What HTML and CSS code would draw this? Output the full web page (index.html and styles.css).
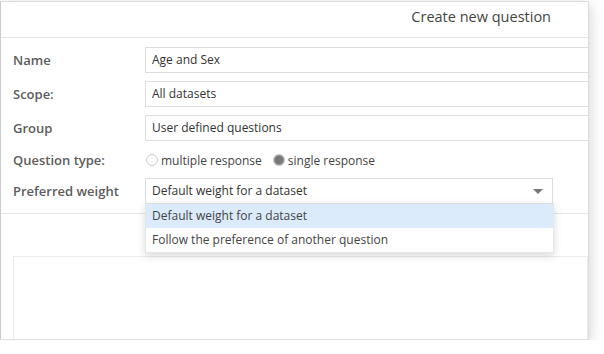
FILE: index.html
```html
<!DOCTYPE html>
<html>
<head>
    <title>Create new question</title>
    <link rel="stylesheet" href="styles.css">
</head>
<body>
    <div class="dialog">
        <div class="header">Create new question</div>

        <div class="form">
            <div class="row">
                <label>Name</label>
                <div class="input">Age and Sex</div>
            </div>
            <div class="row">
                <label>Scope:</label>
                <div class="input">All datasets</div>
            </div>
            <div class="row">
                <label>Group</label>
                <div class="input">User defined questions</div>
            </div>
            <div class="row radio-row">
                <label>Question type:</label>
                <span class="radio"></span><span class="radio-text">multiple response</span>
                <span class="radio checked"></span><span class="radio-text">single response</span>
            </div>
            <div class="row">
                <label>Preferred weight</label>
                <div class="select">
                    Default weight for a dataset
                    <span class="arrow"></span>
                    <div class="menu">
                        <div class="option active">Default weight for a dataset</div>
                        <div class="option">Follow the preference of another question</div>
                    </div>
                </div>
            </div>
        </div>

        <div class="panel"></div>
    </div>
</body>
</html>
```

FILE: styles.css
```css
body {
    margin: 0;
    background: white;
    font-family: "Open Sans", Arial, sans-serif;
    color: #444;
}
.dialog {
    width: 587px;
    height: 337px;
    margin: 1px 0 0 0;
    border: 1px solid #ddd;
    border-left-color: #ccc;
    box-shadow: 0 4px 14px rgba(0,0,0,0.2);
    overflow: hidden;
    background: white;
}
.header {
    height: 35px;
    line-height: 30px;
    border-bottom: 1px solid #e3e3e3;
    text-align: right;
    padding-right: 37px;
    font-size: 14.5px;
    color: #444;
}
.form {
    padding: 9px 0 9px 12px;
    border-bottom: 1px solid #e5e5e5;
}
.row {
    display: flex;
    align-items: center;
    margin-bottom: 8px;
}
.row:last-child {
    margin-bottom: 0;
}
.row label {
    width: 132px;
    flex-shrink: 0;
    font-size: 13px;
    font-weight: 600;
    color: #5c5c5c;
}
.input {
    width: 460px;
    flex-shrink: 0;
    height: 24px;
    line-height: 24px;
    border: 1px solid #ddd;
    padding-left: 6px;
    font-size: 12px;
    color: #333;
}
.radio-row {
    height: 20px;
    margin: 9px 0 8px 0;
}
.radio {
    width: 10px;
    height: 10px;
    border: 1.5px solid #ccc;
    border-radius: 50%;
    margin-left: 1px;
    margin-right: 3px;
    background: white;
}
.radio.checked {
    background: #777;
    border-color: #ccc;
    box-shadow: inset 0 0 0 1px #999;
    margin-left: 0;
}
.radio-text {
    font-size: 12px;
    color: #444;
    margin-right: 11px;
}
.select {
    position: relative;
    width: 400px;
    height: 24px;
    line-height: 24px;
    border: 1px solid #ddd;
    padding-left: 6px;
    font-size: 12px;
    color: #333;
}
.arrow {
    position: absolute;
    right: 9px;
    top: 10px;
    border-left: 5px solid transparent;
    border-right: 5px solid transparent;
    border-top: 5px solid #777;
}
.menu {
    position: absolute;
    left: -1px;
    top: 24px;
    width: 407px;
    background: white;
    border: 1px solid #e6e6e6;
    border-top-color: #ddd;
    box-shadow: 0 3px 8px rgba(0,0,0,0.15);
    z-index: 2;
}
.option {
    height: 24px;
    line-height: 24px;
    padding-left: 6px;
    color: #444;
}
.option.active {
    background: #dbebfc;
}
.panel {
    margin: 42px 0 0 12px;
    height: 100px;
    border: 1px solid #ececec;
}
```
